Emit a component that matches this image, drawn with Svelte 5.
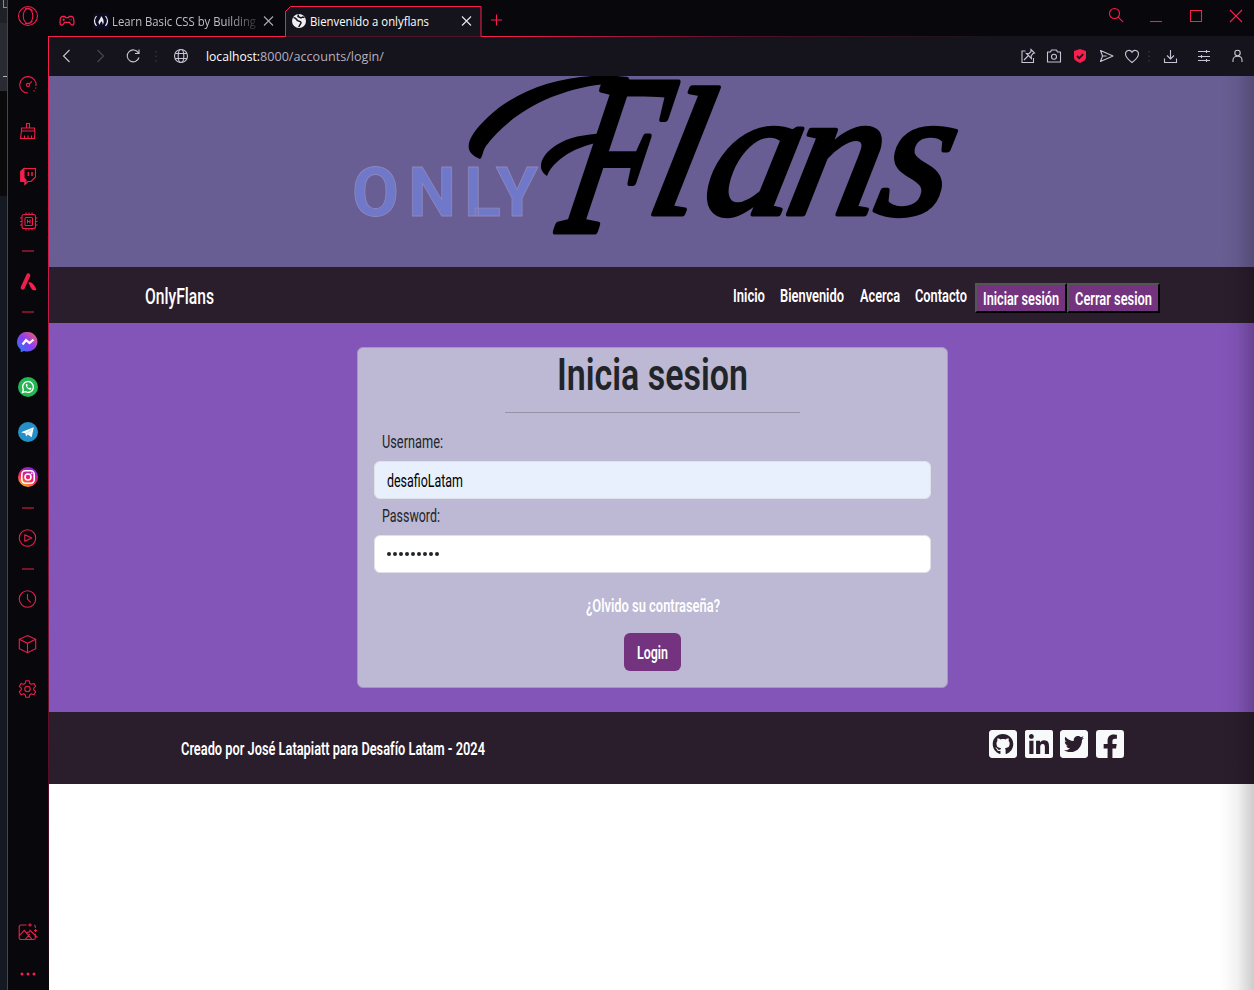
<script>
  const side = [
    { k: 'opera', h: 32 },
    { k: 'gauge', h: 46, gap: 30 },
    { k: 'broom', h: 45 },
    { k: 'twitch', h: 45 },
    { k: 'chip', h: 46 },
    { k: 'dash', h: 14 },
    { k: 'aria', h: 47 },
    { k: 'dash', h: 13 },
    { k: 'messenger', h: 48 },
    { k: 'whatsapp', h: 42 },
    { k: 'telegram', h: 47 },
    { k: 'instagram', h: 44 },
    { k: 'dash', h: 17 },
    { k: 'play', h: 44 },
    { k: 'dash', h: 17 },
    { k: 'clock', h: 43 },
    { k: 'cube', h: 47 },
    { k: 'gear', h: 43 }
  ];
  const sideEnd = [
    { k: 'picture', h: 53 },
    { k: 'more', h: 32 }
  ];
  const tools = [
    { k: 'pin', w: 26 },
    { k: 'camera', w: 26 },
    { k: 'shield', w: 26 },
    { k: 'send', w: 26 },
    { k: 'heart', w: 26 },
    { k: 'sep', w: 8 },
    { k: 'download', w: 34 },
    { k: 'sliders', w: 34 },
    { k: 'person', w: 33 }
  ];
  const links = [
    { label: 'Inicio', w: 32 },
    { label: 'Bienvenido', w: 64 },
    { label: 'Acerca', w: 40 },
    { label: 'Contacto', w: 52 }
  ];

  const icons = {
    opera: '<circle cx="12" cy="12" r="9.500"/><ellipse cx="12" cy="12" rx="4.800" ry="7.400"/><path d="M9 5c2-1.500 6-.5 7.500 2M9 19c2 1.500 6 .5 7.500-2"/>',
    gauge: '<path d="M12 20a8.200 8.200 0 1 1 8-7"/><circle cx="12" cy="12" r="1.600"/><path d="m13.300 10.800 2.500-2.400"/><path d="M20 14.500l-.8 2M18.500 17.500l-1.500 1.300" stroke-dasharray="1.200 1.200"/>',
    broom: '<path d="M10.500 9V4.500h3V9M5.500 12V9h13v3zM5.500 12 4.500 19.500h14l.5-7.500M8.500 19v-2.500M12 19v-2.500M15.500 19v-2.500"/>',
    twitch: '<path d="M4.800 7.500 8 4.500h11.500v8.500l-4.500 4.500h-3l-3 3v-3H4.800z"/><path d="M4.800 7.500 8 4.500V14l2 2v1.500l-1 3v-3H4.800z" fill="#fa1e4e"/><path d="M12.300 8v4M16 8v4" stroke-width="1.500"/>',
    chip: '<rect x="6" y="5.500" width="13.500" height="14" rx="2"/><rect x="9" y="8.500" width="7.500" height="8" rx="1"/><path d="M11.500 10.500v4M14 10.500v4M11.500 12.500H14M10 3.500v2M13 3.500v2M16 3.500v2M10 19.500v2M13 19.500v2M16 19.500v2M4 9h2M4 12.500h2M4 16h2M19.500 9h2M19.500 12.500h2M19.500 16h2"/>',
    dash: '<path d="M6 12h12" stroke-width="1"/>',
    aria: '<path d="M12.300 5.500 6.800 17.500" stroke-width="4.200" stroke-linecap="round"/><path d="M12.300 12.300c3-.8 6 1.500 8.200 7.700-2.500.8-4.500 0-5.500-2-1-2.200-2-3.500-2.700-5.700z" fill="#fa1e4e" stroke="none"/>',
    play: '<circle cx="11.500" cy="12" r="8.200"/><path d="M8.800 8.800v6.400l7-3.200z" stroke-linejoin="round"/>',
    clock: '<circle cx="11.500" cy="12" r="8.200"/><path d="M11.500 7v5l3.200 3.500"/>',
    cube: '<path d="m11.500 3.500 8.200 3.800v9.400l-8.200 4-8.200-4V7.300zM3.300 7.300l8.200 4 8.200-4M11.500 11.300v9.400"/>',
    gear: '<circle cx="11.500" cy="12" r="2.700"/><path d="M9.800 3.800h3.400l.6 2.600 1.600.9 2.600-.9 1.700 3-2 1.800v1.700l2 1.800-1.700 3-2.600-.9-1.600.9-.6 2.600H9.800l-.6-2.600-1.600-.9-2.600.9-1.700-3 2-1.800v-1.700l-2-1.800 1.700-3 2.600.9 1.600-.9z" stroke-linejoin="round"/>',
    picture: '<path d="M10.500 5H5a1.800 1.800 0 0 0-1.800 1.800v10.400A1.800 1.800 0 0 0 5 19.500h12.500a1.800 1.800 0 0 0 1.800-1.800v-4M19.300 8V6.500A1.500 1.500 0 0 0 18 5M3.500 15.500l4.700-5.200 7.800 9M10.500 13l3.500-1.500M14 14l-5 5.500M12 5h4M14 3.200v3.600M13.500 10l8 7.500M18 10.500h3M19.500 9v3"/>',
    more: '<g fill="#fa1e4e" stroke="none"><circle cx="6" cy="12" r="1.500"/><circle cx="12" cy="12" r="1.500"/><circle cx="18" cy="12" r="1.500"/></g>',
    messenger: '<defs><linearGradient id="ms" x1="0" y1="1" x2="1" y2="0"><stop offset="0" stop-color="#1a82ff"/><stop offset=".5" stop-color="#8a3df0"/><stop offset="1" stop-color="#ff6060"/></linearGradient></defs><path d="M12 2a10 9.800 0 1 1-4 19l-3.200 1.200-.2-3A9.800 9.800 0 0 1 12 2z" fill="url(#ms)" stroke="none"/><path d="m6.500 14.500 3.500-4.300 3.500 2.800 4-3.500" stroke="#fff" stroke-width="2.300"/>',
    whatsapp: '<circle cx="12" cy="12" r="10" fill="#24b653" stroke="none"/><path d="m6.500 17.500.8-2.900a5.400 5.400 0 1 1 2.100 2.100z" stroke="#fff" stroke-width="1.400"/><path d="M9.800 9.200c-.2 2.800 2.200 5.400 5 5.600l.8-1.500-1.700-.8-.8.700c-1-.4-1.700-1.200-2-2l.7-.8-.7-1.600z" fill="#fff" stroke="none"/>',
    telegram: '<circle cx="12" cy="12" r="10" fill="#2590c8" stroke="none"/><path d="M5 12.200 17.800 7.200 15.700 17.200 11.800 14.500 10 16.500 9.500 13.500z" fill="#fff" stroke="none"/><path d="m9.500 13.500 6-4-4.200 4.700" stroke="#b9d9ea" stroke-width=".8"/>',
    instagram: '<defs><linearGradient id="ig" x1=".2" y1="1" x2=".7" y2="0"><stop offset="0" stop-color="#ffc020"/><stop offset=".45" stop-color="#f32060"/><stop offset="1" stop-color="#8020f0"/></linearGradient></defs><circle cx="12" cy="12" r="10" fill="url(#ig)" stroke="none"/><rect x="5.800" y="5.800" width="12.400" height="12.400" rx="3.600" stroke="#fff" stroke-width="1.600"/><circle cx="12" cy="12" r="3" stroke="#fff" stroke-width="1.600"/><circle cx="15.700" cy="8.300" r=".9" fill="#fff" stroke="none"/>',
    gamepad: '<path d="M7.500 7.500h2.300l.8 1.200h2.800l.8-1.200h2.300c1.500 0 2.500 2.500 2.500 6 0 3-2.500 3.200-3.500 1.500l-1-1.600H9.500l-1 1.600C7.500 16.700 5 16.500 5 13.500c0-3.500 1-6 2.500-6z" stroke-width="1.300"/><path d="M7.500 10.800h2.400M8.700 9.600V12M14.500 10.800h.8M16.200 10.800h.8" />',
    close: '<path d="m8 7.500 9 9m0-9-9 9"/>',
    bigclose: '<path d="m6 6 12 12M18 6 6 18"/>',
    plus: '<path d="M12.500 6.500v11M7 12h11"/>',
    earth: '<circle cx="12" cy="12" r="7" fill="#f0f0f5" stroke="none"/><path d="M6.500 8.500c2.500 0 3 2 4 3.200 1.500.8 3.500.3 3.500 2s-1.800 1.800-2 4.300M11.500 5.500l-.5 2 3 1.500 1.500-1 2 .5" stroke="#15131b" stroke-width="1.500"/>',
    search: '<circle cx="10.500" cy="9.500" r="5"/><path d="m14.200 13.200 5 5"/>',
    min: '<path d="M6 17.500h12"/>',
    max: '<path d="M6.500 6.500h11v11h-11z"/>',
    back: '<path d="m14.500 6-6 6 6 6"/>',
    fwd: '<path d="m9.500 6 6 6-6 6"/>',
    reload: '<path d="M17.500 9a6 6 0 1 0 .5 4.500M18 5.500V9.500h-4"/>',
    sep: '<path d="M12 7v11" stroke-dasharray="1.500 3" stroke="#35323f" stroke-width="1.500"/>',
    globe: '<circle cx="12" cy="12" r="6.500"/><ellipse cx="12" cy="12" rx="2.800" ry="6.500"/><path d="M6.300 9.500h11.400M6.300 14.500h11.400"/>',
    pin: '<path d="M9.500 7H6v11.500h11.500V14M15 5.500l3.500 3.500-1.500.5-1.800 2.500.2 2.500-5-5 2.500.2 2-2zM12 12l-4 4"/>',
    camera: '<path d="M5.500 8h3l1-2h5l1 2h3v10h-13z" stroke-linejoin="round"/><circle cx="12" cy="12.700" r="2.500"/>',
    shield: '<path d="m12 5 6 2v6.500c0 2.500-2.500 4-6 5.500-3.500-1.500-6-3-6-5.500V7z" fill="#fa1e4e" stroke="none"/><path d="m9 12 2.200 2.200 4-4" stroke="#15131b" stroke-width="1.800"/>',
    send: '<path d="m6.500 6.500 12.500 5.500-12.500 5.500 2-5.500zM8.500 12h4" stroke-linejoin="round"/>',
    heart: '<path d="M12 18.500C8 15.500 5.500 13 5.500 10c0-3.800 4.800-5 6.500-1.700C13.700 5 18.500 6.200 18.500 10c0 3-2.500 5.500-6.500 8.500z"/>',
    download: '<path d="M12.500 6v9M9 11.500l3.500 3.500 3.500-3.500M6.500 14.500v4h12v-4"/>',
    sliders: '<path d="M6 7.500h12M6 12.500h12M6 16.500h12M14.500 6v3M9.500 11v3M14.500 15v3"/>',
    person: '<circle cx="11.500" cy="9" r="2.700"/><path d="M7 18v-2c0-5 9-5 9 0v2"/>'
  };

  const sq = 'M400 32H48C21.500 32 0 53.500 0 80v352c0 26.500 21.500 48 48 48h352c26.500 0 48-21.500 48-48V80c0-26.500-21.500-48-48-48z';
  const social = [
    sq + 'M277.300 415.700c-8.400 1.500-11.500-3.700-11.500-8 0-5.400.2-33 .2-55.300 0-15.600-5.200-25.500-11.300-30.700 37-4.100 76-9.200 76-73.100 0-18.200-6.500-27.300-17.100-39 1.700-4.300 7.400-22-1.700-45-13.900-4.300-45.700 17.900-45.700 17.900-13.200-3.700-27.500-5.600-41.600-5.600-14.100 0-28.400 1.900-41.600 5.600 0 0-31.800-22.200-45.700-17.900-9.100 22.900-3.500 40.600-1.700 45-10.600 11.700-15.600 20.800-15.600 39 0 63.600 37.300 69 74.300 73.100-4.800 4.300-9.100 11.700-10.600 22.300-9.500 4.300-33.800 11.700-48.300-13.900-9.100-15.800-25.500-17.100-25.500-17.100-16.200-.2-1.100 10.200-1.100 10.200 10.800 5 18.400 24.200 18.400 24.200 9.700 29.700 56.100 19.700 56.100 19.700 0 13.900.2 36.500.2 40.600 0 4.300-3 9.500-11.500 8-66-22.100-112.200-84.900-112.200-158.300 0-91.800 70.200-161.500 162-161.500S388 165.600 388 257.400c.1 73.400-44.700 136.300-110.700 158.300z',
    'M416 32H31.900C14.300 32 0 46.500 0 64.300v383.400C0 465.500 14.300 480 31.900 480H416c17.600 0 32-14.500 32-32.300V64.300c0-17.800-14.400-32.300-32-32.300zM135.400 416H69V202.200h66.500V416zm-33.200-243c-21.300 0-38.500-17.300-38.500-38.500S80.900 96 102.200 96c21.200 0 38.500 17.300 38.500 38.500 0 21.300-17.200 38.500-38.500 38.500zm282.100 243h-66.400V312c0-24.800-.5-56.700-34.500-56.700-34.600 0-39.900 27-39.900 54.900V416h-66.400V202.200h63.700v29.200h.9c8.900-16.800 30.600-34.500 62.900-34.500 67.200 0 79.700 44.300 79.700 101.900V416z',
    sq + 'm-48.900 158.800c.2 2.800.2 5.700.2 8.500 0 86.700-66 186.600-186.600 186.600-37.200 0-71.700-10.800-100.700-29.400 5.300.6 10.400.8 15.800.8 30.700 0 58.900-10.400 81.400-28-28.800-.6-53-19.500-61.300-45.500 10.100 1.500 19.200 1.500 29.600-1.200-30-6.100-52.500-32.500-52.500-64.400v-.8c8.700 4.900 18.900 7.900 29.600 8.300a65.447 65.447 0 0 1-29.200-54.600c0-12.200 3.200-23.400 8.900-33.100 32.300 39.800 80.800 65.800 135.200 68.600-9.300-44.500 24-80.600 64-80.600 18.900 0 35.900 7.900 47.900 20.700 14.800-2.800 29-8.300 41.600-15.800-4.900 15.200-15.200 28-28.800 36.100 13.200-1.400 26-5.100 37.800-10.200-8.900 13.100-20.100 24.700-32.900 34z',
    'M400 32H48A48 48 0 0 0 0 80v352a48 48 0 0 0 48 48h137.250V327.690h-63V256h63v-54.640c0-62.150 37-96.480 93.670-96.480 27.140 0 55.520 4.840 55.520 4.840v61h-31.270c-30.810 0-40.420 19.120-40.420 38.730V256h68.780l-11 71.690h-57.780V480H400a48 48 0 0 0 48-48V80a48 48 0 0 0-48-48z'
  ];
</script>

{#snippet icon(k)}
  <svg class="ic" width="24" height="24" viewBox="0 0 24 24">{@html icons[k]}</svg>
{/snippet}

{#snippet label(str, w, cls)}
  <svg class="lb {cls}" width={w} height="24"><text x="0" y="18" textLength={w} lengthAdjust="spacingAndGlyphs">{str}</text></svg>
{/snippet}

<div class="screen">
  <div class="behind"><i></i><b></b></div>
  <aside>
    {#each side as s}
      <div class="cell" style="height:{s.h}px;margin-top:{s.gap ?? 0}px">{@render icon(s.k)}</div>
    {/each}
    <div class="grow"></div>
    {#each sideEnd as s}
      <div class="cell" style="height:{s.h}px">{@render icon(s.k)}</div>
    {/each}
  </aside>
  <div class="rail"></div>
  <div class="window">
    <div class="tabs">
      <div class="cell pad">{@render icon('gamepad')}</div>
      <div class="tab">
        <svg class="fcc" width="16" height="16" viewBox="0 0 16 16"><rect width="16" height="16" fill="#0a0a23"/><path d="M3.500 3Q-.5 8 3.500 13M12.500 3q4 5 0 10" fill="none" stroke="#eee" stroke-width="1.200"/><path d="M8 3c2 2 3 4.500 2.600 7L9.500 12c.6-2-.5-2.500-1-4-.5 1.500-2 2-1.500 4L5.500 10C5 7.500 8 6 8 3z" fill="#eee"/></svg>
        <div class="title fade">{@render label('Learn Basic CSS by Building', 144, 'ui dim')}</div>
        {@render icon('close')}
      </div>
      <div class="tab active">
        <svg class="edge" width="198" height="38"><path d="M0 36.500h.500V11.500l5-5h190.500V36.500" fill="#15131b" stroke="#fa1e4e"/><path d="M1 36.500h194.500v1.500H1z" fill="#15131b"/></svg>
        <div class="front">
          {@render icon('earth')}
          <div class="title">{@render label('Bienvenido a onlyflans', 119, 'ui white')}</div>
          {@render icon('close')}
        </div>
      </div>
      <div class="cell plus">{@render icon('plus')}</div>
      <div class="grow"></div>
      <div class="cell win">{@render icon('search')}</div>
      <div class="cell win">{@render icon('min')}</div>
      <div class="cell win">{@render icon('max')}</div>
      <div class="cell win last">{@render icon('bigclose')}</div>
    </div>

    <div class="address">
      <div class="cell" style="width:36px">{@render icon('back')}</div>
      <div class="cell off" style="width:30px">{@render icon('fwd')}</div>
      <div class="cell" style="width:36px">{@render icon('reload')}</div>
      <div class="cell" style="width:10px">{@render icon('sep')}</div>
      <div class="cell" style="width:40px">{@render icon('globe')}</div>
      <div class="url">
        {@render label('localhost:', 54, 'ui url1')}{@render label('8000/accounts/login/', 124, 'ui url2')}
      </div>
      <div class="grow"></div>
      {#each tools as t}
        <div class="cell" style="width:{t.w}px">{@render icon(t.k)}</div>
      {/each}
    </div>

    <div class="page">
      <header>
        <svg width="620" height="191" viewBox="345 76 620 191">
          <text class="only" x="352 408 464 496" y="215.500">ONLY</text>
          <path d="M480 159C462 152 466 138 488 117 522 85 575 71 628 77L632 84C572 80 514 108 486 146 482 152 483 157 480 159z"/>
          <path d="M547 176C536 169 540 154 560 143 574 135 592 134 610 133L609 141C584 143 555 156 547 176z"/>
          <text class="flans cap" transform="matrix(.64 0 -.22 1 556 231)">F</text>
          <text class="flans" x="-6 49 132 222" transform="matrix(1 0 -.22 1 650 214)">lans</text>
        </svg>
      </header>

      <nav>
        {@render label('OnlyFlans', 69, 'brand')}
        <div class="grow"></div>
        <div class="links">
          {#each links as l}
            {@render label(l.label, l.w, 'med')}
          {/each}
        </div>
        <button class="nb">{@render label('Iniciar sesión', 76, 'med')}</button>
        <button class="nb">{@render label('Cerrar sesion', 77, 'med')}</button>
      </nav>

      <main>
        <section class="card">
          <svg class="h" width="191" height="48"><text x="0" y="41.500" textLength="191" lengthAdjust="spacingAndGlyphs">Inicia sesion</text></svg>
          <hr />
          <div class="field">
            {@render label('Username:', 61, 'cap1')}
            <div class="input filled">{@render label('desafioLatam', 76, 'val')}</div>
          </div>
          <div class="field">
            {@render label('Password:', 58, 'cap1')}
            <div class="input"><span class="dots">{#each Array(9) as _}<i></i>{/each}</span></div>
          </div>
          <div class="forgot">{@render label('¿Olvido su contraseña?', 134, 'med')}</div>
          <button class="login">{@render label('Login', 31, 'med')}</button>
        </section>
      </main>

      <footer>
        {@render label('Creado por José Latapiatt para Desafío Latam - 2024', 304, 'med')}
        <div class="grow"></div>
        <div class="social">
          {#each social as d}
            <svg width="28" height="28" viewBox="0 32 448 448"><path {d} fill="#f8f9fa" fill-rule="evenodd" /></svg>
          {/each}
        </div>
      </footer>
      <div class="shade"></div>
    </div>
  </div>
</div>

<style>
  :global(body) { margin: 0; background: #fff; }
  .screen { display: flex; width: 1254px; height: 990px; overflow: hidden; font-family: Roboto, sans-serif; }
  .behind { width: 7px; border-right: 1px solid #45454a; background: linear-gradient(#202027 0 23px, #2a2a33 23px 91px, #0a0a0c 91px 196px, #151922 196px); display: flex; flex-direction: column; align-items: flex-end; }
  .behind i { width: 4px; height: 8px; border: solid #8c8c90; border-width: 0 0 1px 1px; box-sizing: border-box; }
  .behind b { width: 4px; height: 1px; background: #b0b0b4; margin-top: 68px; }
  aside { width: 40px; background: #08070c; display: flex; flex-direction: column; color: #ee1e4b; }
  .rail { width: 1px; background: linear-gradient(#08070c 0 36px, #fa1e4e 36px, #d01a4a 250px, #8c1338 550px, #3a0a1c 900px, #08070c); }
  .cell { display: flex; align-items: center; justify-content: center; flex: none; }
  .grow { flex: 1; }
  .ic { flex: none; display: block; fill: none; stroke: currentColor; stroke-width: 1.1; }
  .window { flex: 1; min-width: 0; display: flex; flex-direction: column; }

  .tabs { height: 37px; box-sizing: border-box; display: flex; color: #fa1e4e; background: linear-gradient(90deg, #fa1e4e 0 440px, #50102a 700px, #15131b 950px) 0 36px / 100% 1px no-repeat, #08070c; }
  .pad { width: 36px; height: 42px; }
  .tab { width: 200px; height: 42px; box-sizing: border-box; padding: 0 5px 0 8px; display: flex; align-items: center; color: #aaa8b0; }
  .fcc { margin-right: 3px; flex: none; }
  .title { flex: 1; overflow: hidden; height: 24px; }
  .fade { -webkit-mask: linear-gradient(90deg, #000 80%, transparent 105%); mask: linear-gradient(90deg, #000 80%, transparent 105%); }
  .active { width: 197px; padding: 0; color: #e8e8f0; position: relative; }
  .edge { position: absolute; left: 0; top: 0; }
  .front { position: relative; width: 100%; display: flex; align-items: center; padding: 0 4px 0 2px; }
  .front .title { margin-left: -1px; }
  .plus { width: 28px; height: 39px; }
  .win { width: 40px; height: 32px; }
  .last { width: 38px; justify-content: flex-start; padding-left: 8px; box-sizing: border-box; }

  .address { height: 39px; box-sizing: border-box; padding-bottom: 1px; background: #15131b; display: flex; align-items: center; color: #c8c4d6; }
  .off { color: #4b4856; }
  .url { display: flex; margin-left: 5px; }

  .lb { display: block; flex: none; overflow: visible; fill: #fff; font-size: 18px; }
  .ui { font-family: 'Open Sans', 'Noto Sans', sans-serif; font-size: 12px; }
  .ui text { transform: translateY(-1px); }
  .title .dim { width: 144px; }
  .dim { fill: #c0bfc6; }
  .url1, .url2 { font-size: 13px; }
  .url2 { fill: #b4b0c2; }
  .med { font-weight: 600; }
  .brand { font-size: 22.5px; font-weight: 500; }
  .cap1 { fill: #212529; }
  .val { fill: #000; }

  .page { flex: 1; background: #fff; position: relative; }
  header { height: 191px; background: #695e93; display: flex; padding-left: 296px; }
  .only { font-family: Roboto, sans-serif; font-weight: 700; font-size: 68px; fill: #7078ca; stroke: #9088b8; stroke-width: .8; stroke-linejoin: round; }
  .flans { font-family: 'Liberation Serif', serif; font-style: italic; font-size: 182px; stroke: #000; stroke-width: 5; stroke-linejoin: round; }
  .cap { font-size: 226px; stroke-width: 7; }

  nav { height: 56px; box-sizing: border-box; background: #2a1d2c; display: flex; align-items: flex-start; padding: 16px 94px 0 96px; }
  nav > .brand { margin-top: 3px; }
  .links { display: flex; gap: 15.300px; margin: 1px 8px 0 0; }
  button { font-family: inherit; }
  .nb { height: 30px; width: 92px; padding: 0; margin: 0; display: flex; align-items: flex-start; justify-content: center; background: #73337f; border: 2px solid; border-color: #555 #000 #000 #555; box-sizing: border-box; }
  .nb .lb { margin-top: 2px; }
  .nb + .nb { width: 93px; }

  main { height: 389px; box-sizing: border-box; background: #8355b9; padding: 24px 0 0 308px; }
  .card { width: 591px; height: 341px; box-sizing: border-box; background: #bdb8d3; border: 1px solid #a39bb5; border-radius: 6px; padding: 0 16px; display: flex; flex-direction: column; align-items: center; }
  .h { font-size: 45px; font-weight: 600; fill: #212529; overflow: visible; flex: none; }
  hr { width: 295px; height: 1px; background: #9791a6; border: 0; margin: 16px 0 17px; flex: none; }
  .field { width: 100%; height: 74px; }
  .field > .cap1 { margin: 0 0 7px 8px; height: 24px; }
  .input { height: 38px; box-sizing: border-box; margin-top: 7px; border: 1px solid #dee2e6; border-radius: 6px; background: #fff; padding: 6px 12px; display: flex; align-items: center; }
  .filled { background: #e8f0fe; }
  .filled .lb { margin-top: 2px; }
  .dots { display: flex; gap: 1px; }
  .dots i { width: 4px; height: 4px; margin-right: .95px; border-radius: 50%; background: #212529; }
  .forgot { margin-top: 16px; height: 24px; }
  .login { width: 57px; height: 38px; margin-top: 15px; padding: 0; border: 0; border-radius: 6px; background: #73337f; display: flex; justify-content: center; align-items: center; }
  .login .lb { margin-top: 1px; }

  footer { height: 72px; box-sizing: border-box; background: #2a1d2c; display: flex; padding: 18px 130px 0 132px; }
  footer > .lb { margin-top: 7px; }
  .social { display: flex; gap: 7.700px; }
  .shade { position: absolute; top: 0; right: 0; bottom: 0; width: 34px; background: linear-gradient(90deg, transparent, rgba(0, 0, 0, .05) 50%, rgba(0, 0, 0, .2)); }
</style>
